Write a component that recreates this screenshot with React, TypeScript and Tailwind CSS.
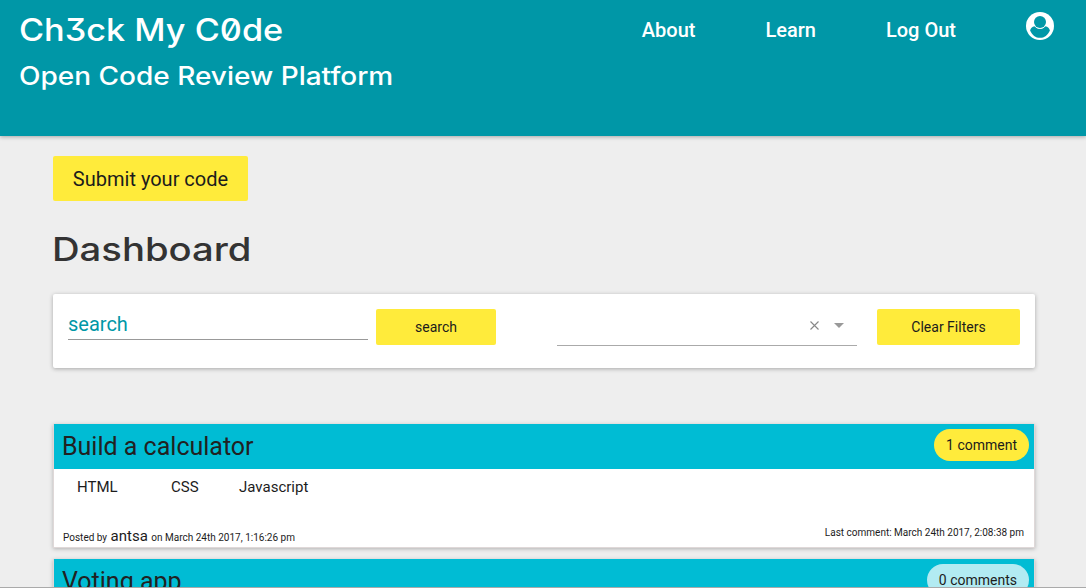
function UserIcon() {
  return (
    <svg viewBox="0 0 28 28" className="block h-7 w-7">
      <circle cx="14" cy="14" r="14" fill="#fff" />
      <path
        d="M4.1 18.4 C4.6 16.1 6 14.6 8.7 14.2 C10 15.8 11.8 16.8 14 16.8 C16.2 16.8 18 15.8 19.3 14.2 C22 14.6 23.4 16.1 23.9 18.4 C22 22.9 18.3 25.8 14 25.8 C9.7 25.8 6 22.9 4.1 18.4 Z"
        fill="#0097a7"
      />
      <circle cx="14" cy="10" r="6.8" fill="#fff" />
      <circle cx="14" cy="10" r="6" fill="#0097a7" />
    </svg>
  );
}

type CardProps = { title: string; comments: string; badge: string; tags: string[] };

function ReviewCard({ title, comments, badge, tags }: CardProps) {
  return (
    <article className="h-[124px] border-x border-b border-[#dfd8d8] bg-white shadow-[0_1px_4px_rgba(0,0,0,0.25)]">
      <header className="flex h-[45px] items-start justify-between bg-[#00bcd4] pr-[5px] pl-2">
        <h2 className="text-[25px] leading-[45px] text-[#212121]">{title}</h2>
        <span className={`mt-[5px] rounded-full px-3 text-[14px] leading-8 ${badge}`}>{comments}</span>
      </header>
      <ul className="flex h-[35px] pl-[23px] text-[15px] leading-[37px]">
        {tags.map((tag, i) => (
          <li key={tag} className={i === 0 ? "w-[94px]" : "w-[68px]"}>
            {tag}
          </li>
        ))}
      </ul>
      <footer className="flex h-[43px] items-start justify-between pr-2.5 pl-[9px] text-[10px]">
        <p className="pt-[22px] leading-[20px] whitespace-nowrap">
          Posted by <span className="mx-px text-[15px]">antsa</span> on March 24th 2017, 1:16:26 pm
        </p>
        <p className="pt-[19px] leading-[20px] whitespace-nowrap">Last comment: March 24th 2017, 2:08:38 pm</p>
      </footer>
    </article>
  );
}

export default function App() {
  return (
    <div className="flex h-[588px] w-[1086px] flex-col overflow-hidden border-b border-[#aaa] bg-[#eee] font-['Roboto',sans-serif] text-[#1c1c1c]">
      <header className="flex h-[136px] shrink-0 justify-between bg-[#0097a7] pr-8 pl-[19px] text-white shadow-[0_1px_4px_rgba(0,0,0,0.3)]">
        <div className="font-['Inter',sans-serif] font-medium whitespace-nowrap">
          <h1 className="mt-[10px] h-10 w-[200px] origin-left scale-x-[1.105] text-[31px] leading-10 [font-feature-settings:'zero','cv09']">
            Ch3ck My C0de
          </h1>
          <p className="mt-[6px] h-10 w-[300px] origin-left scale-x-[1.12] text-[25px] leading-10">Open Code Review Platform</p>
        </div>
        <nav className="flex items-start gap-[70px] text-[20px] leading-[60px] font-medium">
          <a>About</a>
          <a>Learn</a>
          <a>Log Out</a>
          <a className="pt-3">
            <UserIcon />
          </a>
        </nav>
      </header>

      <main className="flex flex-col items-start pt-5 pr-[51px] pl-[53px]">
        <button className="h-[45px] w-[195px] rounded-[2px] bg-[#ffeb3b] text-[20px]">Submit your code</button>
        <h1 className="mt-[29px] -ml-px h-10 w-[160px] origin-left scale-x-[1.195] font-['Inter',sans-serif] text-[32px] leading-10 font-medium text-[#333]">
          Dashboard
        </h1>
        <section className="mt-[24px] flex h-[74px] w-full rounded-[2px] bg-white pt-[15px] pl-[15px] shadow-[0_1px_4px_rgba(0,0,0,0.3)]">
          <div className="h-[31px] w-[300px] border-b border-[#999] text-[20px] leading-[30px] text-[#0097a7]">search</div>
          <button className="ml-2 h-9 w-[120px] rounded-[2px] bg-[#ffeb3b] text-[14px]">search</button>
          <div className="ml-[61px] flex h-[37px] w-[300px] items-start justify-end border-b border-[#aaa] pr-[13px]">
            <svg viewBox="0 0 9 9" className="mt-[12px] h-[9px] w-[9px]" stroke="#888" strokeWidth="1.1">
              <path d="M.5.5l8 8M8.5.5l-8 8" />
            </svg>
            <svg viewBox="0 0 10 5" className="mt-[14px] ml-[15px] h-[5px] w-2.5" fill="#999">
              <path d="M0 0h10L5 5z" />
            </svg>
          </div>
          <button className="ml-5 h-9 w-[143px] rounded-[2px] bg-[#ffeb3b] text-[14px]">Clear Filters</button>
        </section>
        <div className="mt-14 flex w-full flex-col gap-[11px]">
          <ReviewCard title="Build a calculator" comments="1 comment" badge="bg-[#ffeb3b]" tags={["HTML", "CSS", "Javascript"]} />
          <ReviewCard title="Voting app" comments="0 comments" badge="bg-[#b2ebf2]" tags={[]} />
        </div>
      </main>
    </div>
  );
}
